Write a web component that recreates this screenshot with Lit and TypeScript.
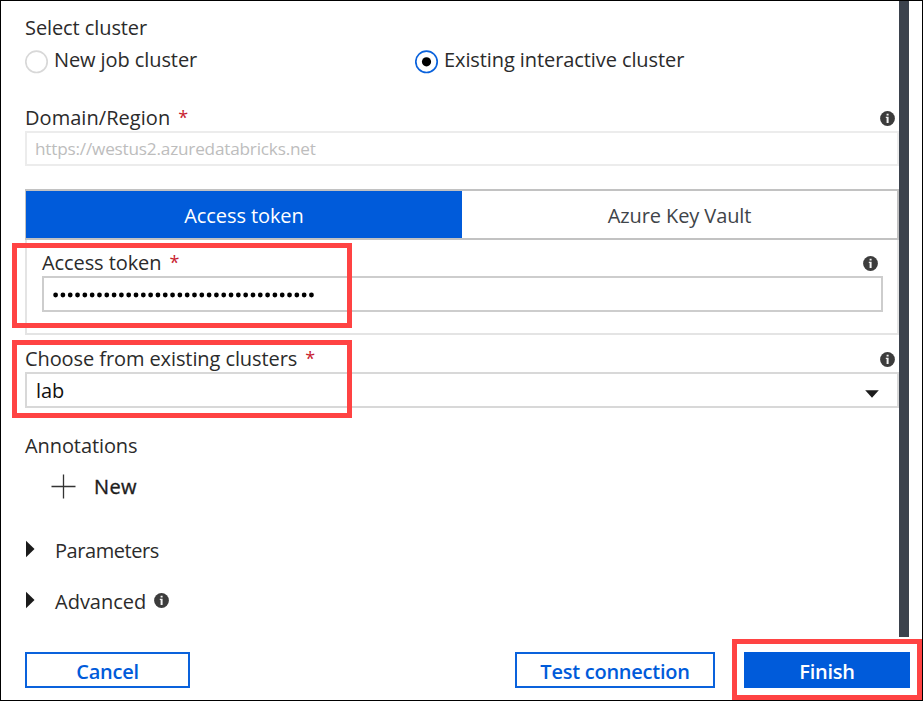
import { LitElement, html, css, svg } from "lit";
import { customElement } from "lit/decorators.js";

@customElement("info-icon")
class InfoIcon extends LitElement {
  static styles = css`
    :host { display: block; width: 15px; height: 15px; flex: none; }
    svg { display: block; }
  `;
  render() {
    return html`<svg width="15" height="15" viewBox="0 0 15 15">
      <circle cx="7.5" cy="7.5" r="7.4" fill="#3c3c3c" />
      <path d="M6.6 2.7h2v1.8h-2zM5.8 5.8h2.8v6.2H6.6V7h-.8z" fill="#f4f4f4" />
    </svg>`;
  }
}

@customElement("field-label")
class FieldLabel extends LitElement {
  static styles = css`
    :host { display: flex; align-items: center; height: 26px; }
    .star { color: #c8202f; margin: -2px 0 0 8px; font-size: 18px; letter-spacing: 0; }
    info-icon { margin-left: auto; }
  `;
  render() {
    return html`<span><slot></slot></span><span class="star">*</span><info-icon></info-icon>`;
  }
}

@customElement("app-root")
export class AppRoot extends LitElement {
  static styles = css`
    :host {
      display: block; position: relative; box-sizing: border-box;
      width: 923px; height: 701px; border: 1px solid #000; background: #fff;
      overflow: hidden; color: #2b2b2b;
      font: 20px/26px "Open Sans", "Noto Sans", sans-serif; letter-spacing: -0.09px;
    }
    * { box-sizing: border-box; }
    .main { display: flex; height: 636px; padding-left: 24px; }
    .form { width: 874px; display: flex; flex-direction: column; padding-top: 14px; }
    .scroll { width: 10px; background: #3b424d; }
    .radios { display: grid; grid-template-columns: 390px 1fr; height: 26px; margin-top: 6px; }
    .radio { display: flex; gap: 5px; }
    .ring { display: block; margin-top: 3px; flex: none; }
    .domain { margin-top: 32px; padding-right: 4px; letter-spacing: 0.05px; }
    .input { height: 36px; border: 2px solid #cdcdcd; display: flex; align-items: center; padding: 0 8px; }
    .disabled { height: 35px; border-color: #ececec; color: #bdbdbd; font-size: 17.2px; letter-spacing: -0.2px; }
    .tabs { display: grid; grid-template-columns: 436px 1fr; height: 51px; margin-top: 23px;
      border: 1px solid #c2c2c2; border-width: 2px 2px 2px 1px; }
    .tab { display: flex; align-items: center; justify-content: center; color: #404449; padding-top: 2px; }
    .active { background: #005bda; color: #fff; }
    .pane { height: 95px; border: 2px solid #e4e4e4; border-top: 0; padding: 10px 14px 0 15px; }
    .token-label { padding-right: 5px; }
    .dots { display: block; margin-top: 2px; }
    .cluster { margin-top: 11px; padding-right: 4px; }
    .select { border-color: #d8d8d8; justify-content: space-between; padding: 2px 18px 0 9px; color: #111; }
    .select svg { margin-top: 5px; }
    .annotations { margin-top: 25px; }
    .new { display: flex; align-items: center; gap: 18px; height: 26px; padding-left: 26px; margin-top: 15px;
      color: #1c1c1c; -webkit-text-stroke: 0.35px #1c1c1c; letter-spacing: 0.4px; }
    .new svg { margin-top: -2px; }
    .fold { display: flex; align-items: center; height: 26px; margin-top: 38px; }
    .parameters { letter-spacing: -0.45px; }
    .advanced { margin-top: 25px; letter-spacing: 0; }
    .fold .tri { margin: -4px 20px 0 0; }
    .fold info-icon { margin: -3px 0 0 8px; }
    .footer { display: flex; height: 36px; margin: 15px 0 0 24px; letter-spacing: -0.25px; }
    .btn { width: 165px; height: 36px; border: 2px solid #0a62dc; background: #fff; color: #005bda;
      display: flex; align-items: center; justify-content: center; font-weight: 600; padding-top: 3px; }
    .test { width: 200px; margin-left: 325px; }
    .finish { width: 166px; margin-left: 29px; background: #005bda; border-color: #005bda; color: #fff; }
    .mark { position: absolute; border: 5px solid #ff4343; left: 11px; width: 340px; }
    .mark-token { top: 242px; height: 85px; }
    .mark-cluster { top: 339px; height: 78px; }
    .mark-finish { left: 731px; top: 638px; width: 190px; height: 61px; }
  `;

  private triangle() {
    return html`<svg class="tri" width="10" height="18" viewBox="0 0 10 18"><path d="M1 .8L9.5 9L1 17.2z" fill="#1b1b1b" /></svg>`;
  }

  private ring(on: boolean) {
    return html`<svg class="ring" width="24" height="24" viewBox="0 0 24 24">
      <circle cx="11.5" cy="11.8" r="10.7" fill="#fff" stroke=${on ? "#0a62dc" : "#d8d8d8"} stroke-width="1.7" />
      ${on ? svg`<circle cx="11.5" cy="11.8" r="4.6" fill="#000" />` : ""}
    </svg>`;
  }

  render() {
    return html`
      <div class="main">
        <div class="form">
          <div><span>Select cluster</span></div>
          <div class="radios">
            <div class="radio">${this.ring(false)}<span>New job cluster</span></div>
            <div class="radio">${this.ring(true)}<span>Existing interactive cluster</span></div>
          </div>
          <field-label class="domain">Domain/Region</field-label>
          <div class="input disabled"><span>https://westus2.azuredatabricks.net</span></div>
          <div class="tabs">
            <div class="tab active"><span>Access token</span></div>
            <div class="tab"><span>Azure Key Vault</span></div>
          </div>
          <div class="pane">
            <field-label class="token-label">Access token</field-label>
            <div class="input">
              <svg class="dots" width="266" height="6" viewBox="0 0 266 6">
                ${Array.from({ length: 36 }, (_, i) => svg`<circle cx=${3.6 + i * 7.31} cy="3" r="2.4" fill="#000" />`)}
              </svg>
            </div>
          </div>
          <field-label class="cluster">Choose from existing clusters</field-label>
          <div class="input select"><span>lab</span>
            <svg width="14" height="8" viewBox="0 0 14 8"><path d="M.2 .3H13.8L7 7.8z" fill="#1b1b1b" /></svg>
          </div>
          <div class="annotations"><span>Annotations</span></div>
          <div class="new">
            <svg width="25" height="25" viewBox="0 0 25 25"><path d="M12.5 .5V24.5M.5 12.5H24.5" stroke="#333" stroke-width="1.3" /></svg>
            <span>New</span>
          </div>
          <div class="fold parameters">${this.triangle()}<span>Parameters</span></div>
          <div class="fold advanced">${this.triangle()}<span>Advanced</span><info-icon></info-icon></div>
        </div>
        <div class="scroll"></div>
      </div>
      <div class="footer">
        <div class="btn"><span>Cancel</span></div>
        <div class="btn test"><span>Test connection</span></div>
        <div class="btn finish"><span>Finish</span></div>
      </div>
      <div class="mark mark-token"></div>
      <div class="mark mark-cluster"></div>
      <div class="mark mark-finish"></div>
    `;
  }
}
